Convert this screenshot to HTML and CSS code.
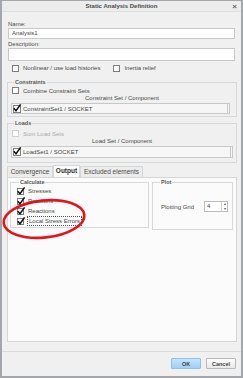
FILE: index.html
```html
<!DOCTYPE html>
<html lang="en">
<head>
  <meta charset="UTF-8">
  <title>Static Analysis Definition</title>
  <link rel="stylesheet" href="styles.css">
</head>
<body>
  <div class="window">
    <div class="titlebar">
      <span></span>
      <span class="title">Static Analysis Definition</span>
      <span class="close">×</span>
    </div>

    <div class="client">
      <div class="field-label">Name:</div>
      <div class="textbox">Analysis1</div>
      <div class="field-label desc">Description:</div>
      <div class="textbox tall"></div>

      <div class="check-row">
        <span class="check"><span class="box"></span>Nonlinear / use load histories</span>
        <span class="check inertia"><span class="box"></span>Inertia relief</span>
      </div>

      <!-- Constraints -->
      <fieldset class="group constraints">
        <legend>Constraints</legend>
        <div class="check"><span class="box"></span>Combine Constraint Sets</div>
        <div class="list-head">Constraint Set / Component</div>
        <div class="list">
          <span class="box big"><svg viewBox="0 0 8 8"><path d="M0.8 4.2 L3 6.8 L7.6 0.4"/></svg></span>
          <span>ConstraintSet1 / SOCKET</span>
        </div>
      </fieldset>

      <!-- Loads -->
      <fieldset class="group loads">
        <legend>Loads</legend>
        <div class="check disabled"><span class="box"></span>Sum Load Sets</div>
        <div class="list-head">Load Set / Component</div>
        <div class="list">
          <span class="box big"><svg viewBox="0 0 8 8"><path d="M0.8 4.2 L3 6.8 L7.6 0.4"/></svg></span>
          <span>LoadSet1 / SOCKET</span>
        </div>
      </fieldset>

      <div class="tabs">
        <div class="tab conv">Convergence</div>
        <div class="tab output active">Output</div>
        <div class="tab excl">Excluded elements</div>
      </div>

      <div class="tab-panel">
        <fieldset class="group calc">
          <legend>Calculate</legend>
          <div class="calc-row"><span class="box"><svg viewBox="0 0 8 8"><path d="M0.8 4.2 L3 6.8 L7.6 0.4"/></svg></span>Stresses</div>
          <div class="calc-row"><span class="box"><svg viewBox="0 0 8 8"><path d="M0.8 4.2 L3 6.8 L7.6 0.4"/></svg></span>Rotations</div>
          <div class="calc-row"><span class="box"><svg viewBox="0 0 8 8"><path d="M0.8 4.2 L3 6.8 L7.6 0.4"/></svg></span>Reactions</div>
          <div class="calc-row"><span class="box"><svg viewBox="0 0 8 8"><path d="M0.8 4.2 L3 6.8 L7.6 0.4"/></svg></span><span class="focus">Local Stress Errors</span></div>
        </fieldset>

        <fieldset class="group plot">
          <legend>Plot</legend>
          <div class="plot-row">
            <span>Plotting Grid</span>
            <div class="spin">
              <span class="spin-val">4</span>
              <span class="spin-btns"><span>▴</span><span>▾</span></span>
            </div>
          </div>
        </fieldset>
      </div>
    </div>

    <div class="footer">
      <button class="btn ok">OK</button>
      <button class="btn">Cancel</button>
    </div>

    <!-- red annotation drawn over the dialog -->
    <svg class="mark" viewBox="0 0 92 50">
      <ellipse cx="43" cy="24" rx="40.5" ry="18.5" transform="rotate(-6 43 24)"/>
    </svg>
  </div>
</body>
</html>
```

FILE: styles.css
```css
* {
  margin: 0;
  padding: 0;
  box-sizing: border-box;
}

body {
  width: 243px;
  height: 378px;
  overflow: hidden;
  font-family: "Liberation Sans", Arial, sans-serif;
  font-size: 6px;
  color: #484848;
  background: #fff;
}

.window {
  position: relative;
  height: 378px;
  border: 2px solid #a3a7ab;
  border-top-width: 1px;
  background: #f0f0f0;
  display: flex;
  flex-direction: column;
}

/* Title bar */
.titlebar {
  height: 11px;
  display: grid;
  grid-template-columns: 1fr auto 1fr;
  align-items: center;
  background: #ececec;
  border-bottom: 1px solid #dedede;
}

.title {
  font-weight: bold;
  color: #4a4a4a;
}

.close {
  justify-self: end;
  margin-right: 4px;
  font-size: 8px;
  font-weight: bold;
  color: #666;
}

.client {
  padding: 9px 6px 0 6px;
  display: flex;
  flex-direction: column;
}

.field-label {
  height: 7px;
  line-height: 7px;
}

.field-label.desc {
  margin-top: 2px;
}

.textbox {
  height: 11px;
  line-height: 9px;
  padding-left: 3px;
  background: #fff;
  border: 1px solid #c9c9c9;
}

.textbox.tall {
  height: 13px;
}

/* Checkboxes */
.box {
  display: inline-flex;
  width: 7px;
  height: 7px;
  margin-right: 4px;
  background: #fff;
  border: 1px solid #7d7d7d;
  flex-shrink: 0;
}

.box svg {
  width: 8px;
  height: 8px;
  margin: -2px 0 0 -1px;
  overflow: visible;
}

.box svg path {
  fill: none;
  stroke: #111;
  stroke-width: 1.5;
}

.check {
  display: flex;
  align-items: center;
  height: 7px;
}

.check.disabled {
  color: #aaa;
}

.check.disabled .box {
  border-color: #d0d0d0;
}

.check-row {
  display: flex;
  margin-top: 3px;
  height: 8px;
  align-items: center;
  padding-left: 4px;
}

.check-row .inertia {
  margin-left: 13px;
}

/* Group boxes */
.group {
  border: 1px solid #d6d9dc;
  padding: 0 3px 2px 3px;
  margin: 7px -2px 0 -1px;
}

.group legend {
  margin-left: 3px;
  padding: 0 1px;
  height: 7px;
  line-height: 7px;
  font-size: 5.5px;
  font-weight: bold;
  color: #555;
}

.group .check {
  margin-top: 1px;
  padding-left: 1px;
}

.list-head {
  height: 7px;
  line-height: 7px;
  margin-top: 1px;
  text-align: center;
}

.list {
  margin-top: 1px;
  height: 11px;
  display: flex;
  align-items: center;
  background: #f6f6f6;
  border: 1px solid #c8c8c8;
  border-right: 3px double #c8c8c8;
  margin-right: 3px;
}

.box.big {
  width: 8px;
  height: 8px;
  margin: 0 2px 0 1px;
}

.loads {
  margin-top: 3px;
  padding-bottom: 4px;
}

.loads .check {
  margin-top: 3px;
}

.loads .list {
  height: 12px;
  margin-right: 0;
}

/* Tabs */
.tabs {
  display: flex;
  margin: 3px -2px 0 -1px;
  height: 11px;
  align-items: flex-end;
}

.tab {
  height: 11px;
  line-height: 10px;
  font-size: 6.5px;
  text-align: center;
  color: #4a4a4a;
  background: #ececec;
  border: 1px solid #d6d6d6;
  border-bottom: none;
}

.tab.conv {
  width: 46px;
}

.tab.output {
  width: 27px;
}

.tab.excl {
  width: 63px;
}

.tab.active {
  height: 12px;
  background: #fbfbfb;
  font-weight: bold;
  color: #333;
}

.tab-panel {
  height: 165px;
  margin: 0 -2px 0 -1px;
  padding: 1px 3px 0 2px;
  background: #fbfbfb;
  border: 1px solid #d6d6d6;
  display: flex;
  gap: 3px;
  align-items: flex-start;
}

.tab-panel .group {
  margin: 0;
}

.calc {
  width: 139px;
  padding: 0 0 1px 6px;
}

.calc legend {
  margin-left: 2px;
}

.calc-row {
  height: 10px;
  display: flex;
  align-items: center;
}

.focus {
  outline: 1px dotted #555;
  padding: 1px;
  line-height: 6px;
}

.plot {
  flex: 1;
  height: 51px;
  padding: 0 0 0 8px;
}

.plot legend {
  margin-left: -1px;
}

.plot-row {
  margin-top: 15px;
  display: flex;
  align-items: center;
}

.spin {
  margin-left: 10px;
  width: 24px;
  height: 11px;
  display: flex;
  background: #fff;
  border: 1px solid #bcbcbc;
}

.spin-val {
  flex: 1;
  padding-left: 2px;
  line-height: 9px;
}

.spin-btns {
  width: 6px;
  display: flex;
  flex-direction: column;
  border-left: 1px solid #d4d4d4;
  font-size: 4px;
  line-height: 4.5px;
  text-align: center;
  color: #555;
}

/* Footer buttons */
.footer {
  margin-top: 9px;
  border-top: 1px solid #dcdcdc;
  padding: 6px 5px 0 0;
  display: flex;
  justify-content: flex-end;
  gap: 5px;
}

.btn {
  width: 30px;
  height: 11px;
  font-family: inherit;
  font-size: 5.5px;
  font-weight: bold;
  color: #444;
  background: linear-gradient(#fdfdfd, #e8e8e8);
  border: 1px solid #b8b8b8;
  border-radius: 1px;
}

.btn.ok {
  background: linear-gradient(#c4e4fb, #9fd0f4);
  border-color: #8fc1e6;
}

/* Red annotation */
.mark {
  position: absolute;
  left: -1px;
  top: 194px;
  width: 92px;
  height: 50px;
}

.mark ellipse {
  fill: none;
  stroke: #e3141c;
  stroke-width: 2.6;
}
```
